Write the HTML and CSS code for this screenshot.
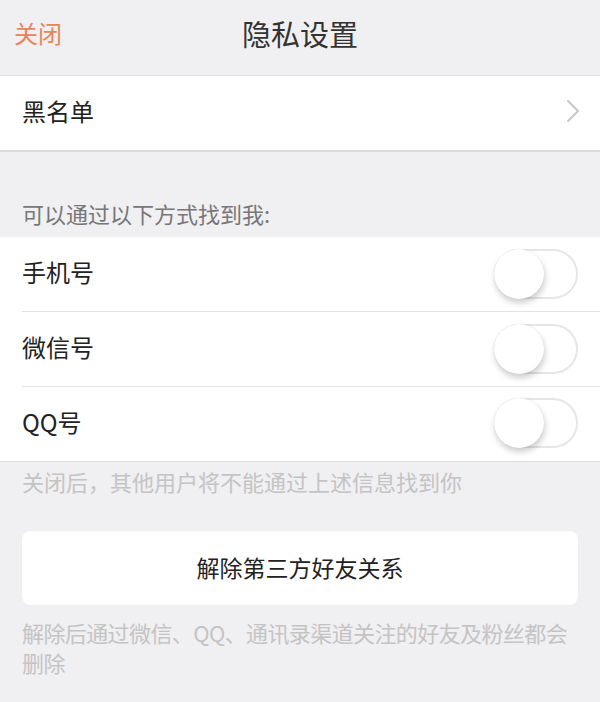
FILE: index.html
```html
<!DOCTYPE html>
<html lang="zh-CN">
<head>
<meta charset="utf-8">
<title>隐私设置</title>
<link rel="stylesheet" href="styles.css">
</head>
<body>
<div class="page">
  <header class="nav">
    <span class="nav-close">关闭</span>
    <span class="nav-title">隐私设置</span>
    <span class="nav-spacer"></span>
  </header>

  <div class="group group-top">
    <div class="row">
      <span class="row-label">黑名单</span>
      <svg class="chevron" width="14" height="24" viewBox="0 0 14 24"><path d="M2 2 L12 12 L2 22" fill="none" stroke="#c7c7cc" stroke-width="2" stroke-linecap="round" stroke-linejoin="round"/></svg>
    </div>
  </div>

  <div class="section-head">可以通过以下方式找到我:</div>

  <div class="group">
    <div class="row row-sep">
      <span class="row-label">手机号</span>
      <span class="switch"><span class="knob"></span></span>
    </div>
    <div class="row row-sep">
      <span class="row-label">微信号</span>
      <span class="switch"><span class="knob"></span></span>
    </div>
    <div class="row">
      <span class="row-label">QQ号</span>
      <span class="switch"><span class="knob"></span></span>
    </div>
  </div>

  <p class="note note-first">关闭后，其他用户将不能通过上述信息找到你</p>

  <div class="button">解除第三方好友关系</div>

  <p class="note note-last">解除后通过微信、QQ、通讯录渠道关注的好友及粉丝都会删除</p>
</div>
</body>
</html>
```

FILE: styles.css
```css
html, body {
  margin: 0;
  padding: 0;
  background: #f0eff2;
}
body {
  font-family: "Noto Sans CJK SC", "Noto Sans", sans-serif;
  color: #222;
}
.page {
  width: 600px;
  height: 702px;
  overflow: hidden;
}
.nav {
  height: 75px;
  display: grid;
  grid-template-columns: 1fr auto 1fr;
  align-items: center;
  padding: 0 14px;
  box-sizing: border-box;
}
.nav-close {
  color: #e8845a;
  font-size: 24px;
  justify-self: start;
  line-height: 1;
  margin-top: -9px;
}
.nav-title {
  font-size: 29px;
  color: #333;
  line-height: 1;
  margin-top: -9px;
}
.group {
  background: #fff;
}
.group-top {
  border-top: 1px solid #dcdcdf;
  border-bottom: 1px solid #dcdcdf;
}
.row {
  height: 74px;
  display: flex;
  align-items: center;
  justify-content: space-between;
  padding: 0 22px 0 22px;
  position: relative;
  box-sizing: border-box;
}
.row-sep {
  height: 75px;
}
.row-sep::after {
  content: "";
  position: absolute;
  left: 22px;
  right: 0;
  bottom: 0;
  height: 1px;
  background: #e3e3e6;
}
.group-top .row {
  height: 73px;
  padding-right: 20px;
}
.chevron {
  margin-top: -4px;
}
.row-label {
  font-size: 24px;
  color: #222;
  line-height: 1;
  margin-top: -5px;
}
.section-head {
  margin-top: 39px;
  height: 46px;
  display: flex;
  align-items: center;
  padding-left: 22px;
  padding-bottom: 3px;
  box-sizing: border-box;
  font-size: 22px;
  color: #777;
}
.switch {
  width: 84px;
  height: 50px;
  box-sizing: border-box;
  border: 2px solid #e6e6e6;
  border-radius: 26px;
  background: #fff;
  position: relative;
  margin-top: -2px;
}
.knob {
  position: absolute;
  left: -2px;
  top: -2px;
  width: 50px;
  height: 50px;
  border-radius: 50%;
  background: #fff;
  box-shadow: 1px 4px 6px rgba(0, 0, 0, 0.2), 0 0 1px rgba(0, 0, 0, 0.1);
}
.group .row:last-child {
  border-bottom: 1px solid #dcdcdf;
  height: 75px;
}
.note {
  margin: 0;
  padding: 0 22px;
  font-size: 22px;
  line-height: 30px;
  color: #c4c4c4;
}
.note-first {
  padding-top: 4px;
}
.button {
  margin: 35px 22px 0;
  height: 74px;
  background: #fff;
  border-radius: 8px;
  display: flex;
  align-items: center;
  justify-content: center;
  padding-bottom: 2px;
  box-sizing: border-box;
  font-size: 23px;
  color: #222;
  box-shadow: 0 0 1px rgba(0, 0, 0, 0.08);
}
.note-last {
  margin-top: 12px;
  letter-spacing: -0.6px;
}
```
